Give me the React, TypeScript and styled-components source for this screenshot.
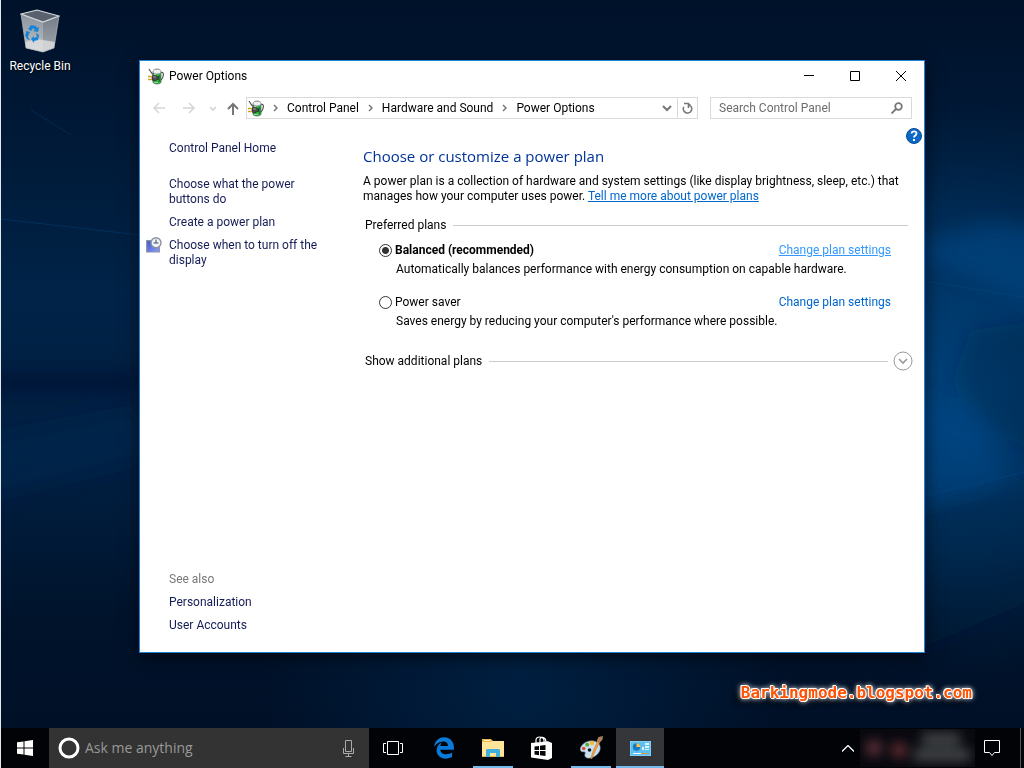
import React, { useState } from "react";
import styled, { createGlobalStyle, css } from "styled-components";
import { FaEdgeLegacy } from "react-icons/fa6";

const uiFont = `Roboto, "Noto Sans", sans-serif`;
const displayFont = `"Open Sans", "Noto Sans", sans-serif`;

const GlobalStyle = createGlobalStyle`
  * { box-sizing: border-box; }
  body { margin: 0; background: #001126; }
  button, input { font: inherit; color: inherit; }
  button { border: 0; padding: 0; background: none; }
  svg { display: block; flex: none; }
`;

const Screen = styled.div`
  display: flex;
  flex-direction: column;
  height: 100vh;
  border-left: 1px solid #e4e8ec;
  font: 12px/15px ${uiFont};
  color: #000;
  overflow: hidden;
`;

const Desktop = styled.main`
  position: relative;
  flex: 1;
  min-height: 0;
  background: #001a37;
`;

const Wallpaper = styled.svg`
  position: absolute;
  inset: 0;
  width: 100%;
  height: 100%;
`;

const DesktopIcon = styled.a`
  position: absolute;
  top: 8px;
  left: 1px;
  width: 76px;
  display: flex;
  flex-direction: column;
  align-items: center;
  gap: 5px;
  color: #fff;
  text-decoration: none;
  text-shadow: 1px 1px 2px #000;
`;

const Watermark = styled.div`
  position: absolute;
  right: 52px;
  bottom: 24px;
  font: bold 16px/22px "DejaVu Sans Mono", monospace;
  color: #ff5205;
  text-shadow: 1px 0 #fff, -1px 0 #fff, 0 1px #fff, 0 -1px #fff, 1px 1px #fff, -1px -1px #fff,
    0 0 5px #fff, 0 0 6px #fff, -6px 5px 6px #000;
`;

const Window = styled.section`
  position: absolute;
  inset: 60px 99px 75px 138px;
  display: flex;
  flex-direction: column;
  background: #fff;
  border: 1px solid #1883d7;
  box-shadow: 0 4px 16px rgba(0, 0, 0, 0.6);
`;

const TitleBar = styled.header`
  display: flex;
  align-items: center;
  height: 30px;
  padding-left: 8px;
  gap: 5px;
`;

const WindowTitle = styled.h1`
  flex: 1;
  margin: 0;
  font-size: 12px;
  font-weight: normal;
`;

const CaptionButtons = styled.div`
  display: flex;
  height: 100%;
`;

const CaptionButton = styled.button`
  display: grid;
  place-items: center;
  width: 46px;
`;

const NavBar = styled.nav`
  display: flex;
  align-items: center;
  padding: 6px 12px 0 7px;
`;

const NavButton = styled.button<{ $w?: number }>`
  display: grid;
  place-items: center;
  width: ${(p) => p.$w ?? 30}px;
  height: 22px;
`;

const AddressBar = styled.div`
  display: flex;
  flex: 1;
  height: 22px;
  margin-right: 12px;
  border: 1px solid #d9d9d9;
`;

const Crumbs = styled.div`
  display: flex;
  flex: 1;
  align-items: center;
  padding-left: 1px;
`;

const Crumb = styled.a`
  color: #000;
  text-decoration: none;
  white-space: nowrap;
`;

const CrumbArrow = styled.svg`
  margin: 0 9px;
`;

const AddressButton = styled.button<{ $divided?: boolean }>`
  display: grid;
  place-items: center;
  width: 20px;
  ${(p) => p.$divided && css`border-left: 1px solid #d9d9d9;`}
`;

const SearchBox = styled.label`
  display: flex;
  align-items: center;
  width: 202px;
  height: 22px;
  padding: 0 8px;
  border: 1px solid #d9d9d9;
`;

const SearchInput = styled.input`
  flex: 1;
  min-width: 0;
  padding: 0;
  border: 0;
  outline: 0;
  background: transparent;
  &::placeholder { color: #6d6d6d; opacity: 1; }
`;

const Body = styled.div`
  position: relative;
  display: flex;
  flex: 1;
  min-height: 0;
`;

const HelpButton = styled.button`
  position: absolute;
  top: 9px;
  right: 2px;
`;

const Sidebar = styled.aside`
  display: flex;
  flex-direction: column;
  gap: 8px;
  width: 195px;
  padding: 22px 12px 19px 29px;
`;

const SideLink = styled.a<{ $home?: boolean }>`
  position: relative;
  color: #151c55;
  text-decoration: none;
  margin-bottom: ${(p) => (p.$home ? 13 : 0)}px;
`;

const SideIcon = styled.svg`
  position: absolute;
  left: -23px;
  top: -1px;
`;

const SeeAlso = styled.div`
  margin-top: auto;
  color: #787878;
`;

const Content = styled.div`
  flex: 1;
  min-width: 0;
  padding: 27px 11px 0 28px;
`;

const Heading = styled.h2`
  margin: 0 0 8px;
  font-family: ${displayFont};
  font-size: 15px;
  line-height: 20px;
  font-weight: normal;
  color: #003399;
`;

const Intro = styled.p`
  margin: 0 0 13px;
`;

const Link = styled.a<{ $hot?: boolean; $plain?: boolean }>`
  color: ${(p) => (p.$hot ? "#3399ff" : "#0066cc")};
  text-decoration: ${(p) => (p.$plain ? "none" : "underline")};
  white-space: nowrap;
`;

const GroupHeader = styled.div`
  display: flex;
  align-items: center;
  height: 16px;
  padding-left: 2px;
`;

const Rule = styled.hr`
  flex: 1;
  height: 1px;
  margin: 0 5px 0 7px;
  border: 0;
  background: #cbcbcb;
`;

const PlanList = styled.div`
  display: flex;
  flex-direction: column;
  gap: 18px;
  padding: 10px 22px 24px 16px;
`;

const Plan = styled.div``;

const PlanTop = styled.div`
  display: flex;
  justify-content: space-between;
`;

const PlanLabel = styled.label<{ $bold?: boolean }>`
  display: flex;
  align-items: center;
  gap: 3px;
  font-weight: ${(p) => (p.$bold ? "bold" : "normal")};
`;

const Radio = styled.input`
  appearance: none;
  width: 13px;
  height: 13px;
  margin: 0;
  border: 1px solid #333;
  border-radius: 50%;
  background: #fff;
  &:checked { background: radial-gradient(circle, #333 3px, #fff 4px); }
`;

const PlanText = styled.p`
  margin: 4px 0 0 17px;
`;

const Taskbar = styled.footer`
  display: flex;
  height: 40px;
  background: #010306;
  color: #fff;
`;

const StartButton = styled.button`
  display: grid;
  place-items: center;
  width: 48px;
`;

const Cortana = styled.label`
  display: flex;
  align-items: center;
  width: 320px;
  padding: 0 14px 0 9px;
  gap: 5px;
  background: #333;
`;

const CortanaInput = styled(SearchInput)`
  font-family: ${displayFont};
  font-size: 14px;
  line-height: 20px;
  &::placeholder { color: #999; }
`;

const TaskButtons = styled.div`
  display: flex;
  flex: 1;
  gap: 1px;
  & > :first-child { margin-right: 2px; }
`;

const TaskButton = styled.button<{ $state?: "open" | "active" }>`
  display: grid;
  place-items: center;
  width: 48px;
  background: ${(p) => (p.$state === "active" ? "#343639" : "none")};
  ${(p) =>
    p.$state &&
    css`
      background-image: linear-gradient(#76b9ed, #76b9ed);
      background-repeat: no-repeat;
      background-position: center bottom;
      background-size: ${p.$state === "active" ? "48px" : "40px"} 2px;
    `}
`;

const Tray = styled.div`
  display: flex;
  align-items: center;
`;

const TrayButton = styled.button<{ $w: number }>`
  display: grid;
  place-items: center;
  width: ${(p) => p.$w}px;
  height: 40px;
`;

const ShowDesktop = styled.button`
  width: 4px;
  height: 40px;
  margin-left: 11px;
  border-left: 1px solid #55585c;
`;

const PowerIcon = () => (
  <svg width="16" height="17" viewBox="0 0 16 17" fill="none">
    <path d="M12.500 4.500c2.500-.8 3.200.5 2.800 3-.3 2-.8 3-2.300 4.500" stroke="#555" strokeWidth="1.200" />
    <path d="M5 3.500v10.500c0 2.600 8 2.600 8 0v-10.500z" fill="#35b344" stroke="#46584a" strokeWidth=".7" />
    <path d="M6 5.500h2v3H6z" fill="#b6ecb6" />
    <path d="M10.500 7h1.800v7h-1.800z" fill="#168527" />
    <path d="M6 14h4v1H6z" fill="#7ddc86" />
    <ellipse cx="9" cy="3.500" rx="4" ry="2.500" fill="#eef1f3" stroke="#8a9299" strokeWidth=".8" />
    <path d="M7 .8h4v1H7z" fill="#9aa29f" />
    <path d="M1 1l2.200 3.500L5 6.500" stroke="#555" strokeWidth="1.200" />
    <path d="M4 8c1.500-1.200 4-1 5 .5h1.500v3H9c-1 1.500-3.500 1.700-5 .5z" fill="#4a4a4a" stroke="#222" strokeWidth=".6" />
    <path d="M5 9h3" stroke="#999" />
    <path d="M0 8.500h3.700M0 11.500h3.700" stroke="#d2a51c" strokeWidth="1.400" />
  </svg>
);

const BinIcon = () => (
  <svg width="40" height="46" viewBox="0 0 40 46">
    <defs>
      <linearGradient id="binL" x2="0" y2="1"><stop stopColor="#8b939c" /><stop offset="1" stopColor="#bfc4c8" /></linearGradient>
      <linearGradient id="binR" x2="0" y2="1"><stop stopColor="#747c87" /><stop offset="1" stopColor="#a4a9ae" /></linearGradient>
    </defs>
    <path d="M1 6L23 14V44L6 40z" fill="url(#binL)" />
    <path d="M23 14L39 8L34 40L23 44z" fill="url(#binR)" />
    <path d="M1 6L17 2L39 8L23 14z" fill="#58616d" />
    <path d="M5 34l12-3 18 3-1 6-11 4-17-4z" fill="#e1e2e3" opacity=".75" />
    <path d="M1 6L17 2L39 8L23 14z" fill="none" stroke="#d8dcdf" strokeWidth="1.200" />
    <path d="M1 6L6 40L23 44L34 40L39 8" fill="none" stroke="#b5babf" strokeWidth=".7" />
    <g fill="#1583d8">
      <path d="M8 21l3-4 5 1 1 2 2-1-1 5-5-1 2-1-2-2-2 3z" />
      <path d="M6 23l4 1-1 2-1 3 2 3-3-1-2-4 1-2z" />
      <path d="M16 25l3 2-1 5-4 1v2l-3-4 3-3v2l3-1z" />
    </g>
  </svg>
);

const DisplayClockIcon = () => (
  <SideIcon width="16" height="16" viewBox="0 0 16 16">
    <defs><linearGradient id="screen" x2="1" y2="1"><stop stopColor="#3a4fd0" /><stop offset="1" stopColor="#8ea2f5" /></linearGradient></defs>
    <path d="M.7 3.700h12.600v11.300H.7z" fill="url(#screen)" stroke="#8a90a8" strokeWidth="1.200" />
    <circle cx="10" cy="5.700" r="5" fill="#f1f4f7" stroke="#8b929b" strokeWidth="1.400" />
    <path d="M10 2.500v3.500M7.500 6h5" fill="none" stroke="#394a63" />
  </SideIcon>
);

const CircleDown = () => (
  <svg width="20" height="20" viewBox="0 0 20 20" fill="none" stroke="#999">
    <circle cx="10" cy="10" r="9" />
    <path d="M6 8l4 4 4-4" strokeWidth="1.600" />
  </svg>
);

const Separator = () => (
  <CrumbArrow width="5" height="8" viewBox="0 0 5 8" fill="none" stroke="#777" strokeWidth="1.500">
    <path d="M1 1l3 3-3 3" />
  </CrumbArrow>
);

const wallpaper = (
  <Wallpaper viewBox="0 0 1023 728" preserveAspectRatio="none" aria-hidden="true">
    <defs>
      <linearGradient id="base" x2="0" y2="1">
        <stop stopColor="#00112a" /><stop offset=".2" stopColor="#001a38" />
        <stop offset=".4" stopColor="#002347" /><stop offset=".65" stopColor="#001f41" />
        <stop offset=".85" stopColor="#00132b" /><stop offset="1" stopColor="#001027" />
      </linearGradient>
      <radialGradient id="glow" cx="960" cy="390" r="290" gradientUnits="userSpaceOnUse">
        <stop stopColor="#004a88" stopOpacity=".85" /><stop offset=".55" stopColor="#003f76" stopOpacity=".5" />
        <stop offset="1" stopColor="#002a54" stopOpacity="0" />
      </radialGradient>
      <radialGradient id="low" cx="520" cy="690" r="260" gradientUnits="userSpaceOnUse">
        <stop stopColor="#002347" stopOpacity=".8" /><stop offset="1" stopColor="#002347" stopOpacity="0" />
      </radialGradient>
      <filter id="soft"><feGaussianBlur stdDeviation="10" /></filter>
    </defs>
    <rect width="1023" height="728" fill="url(#base)" />
    <rect width="1023" height="728" fill="url(#low)" />
    <rect width="1023" height="728" fill="url(#glow)" />
    <g filter="url(#soft)">
      <path d="M970 330L1043 320V460L995 430L950 385z" fill="#001c3d" opacity=".3" />
      <path d="M904 390l80 40 20 50-100 30z" fill="#0059a2" opacity=".25" />
      <path d="M904 250l86-27 53 6v76z" fill="#00569e" opacity=".35" />
      <path d="M904 510l139-35v120l-139 60z" fill="#001b3b" opacity=".25" />
      <path d="M-20 372h159v20H-20z" fill="#001024" opacity=".4" />
      <path d="M-20 440l159-30v50L-20 500z" fill="#003058" opacity=".3" />
    </g>
    <path d="M924 281l99 16M924 496l99-24M0 219l139 16M30 110l40 25" stroke="#075596" strokeOpacity=".3" fill="none" />
  </Wallpaper>
);

const plans = [
  { id: "balanced", name: "Balanced (recommended)", text: "Automatically balances performance with energy consumption on capable hardware." },
  { id: "saver", name: "Power saver", text: "Saves energy by reducing your computer's performance where possible." },
];

export default function App() {
  const [plan, setPlan] = useState("balanced");
  return (
    <Screen>
      <GlobalStyle />
      <Desktop>
        {wallpaper}
        <DesktopIcon href="#bin"><BinIcon />Recycle Bin</DesktopIcon>
        <Window>
          <TitleBar>
            <PowerIcon />
            <WindowTitle>Power Options</WindowTitle>
            <CaptionButtons>
              <CaptionButton aria-label="Minimize"><svg width="10" height="10"><path d="M0 4.500h10" stroke="#000" /></svg></CaptionButton>
              <CaptionButton aria-label="Maximize"><svg width="10" height="10"><path d="M.5.5h9v9h-9z" stroke="#000" fill="none" /></svg></CaptionButton>
              <CaptionButton aria-label="Close"><svg width="10" height="10"><path d="M0 0l10 10M10 0L0 10" stroke="#000" /></svg></CaptionButton>
            </CaptionButtons>
          </TitleBar>
          <NavBar aria-label="Location">
            <NavButton $w={24} aria-label="Back"><svg width="12" height="12" fill="none" stroke="#d5d5d5" strokeWidth="1.500"><path d="M12 6H1M6 1L1 6l5 5" /></svg></NavButton>
            <NavButton $w={36} aria-label="Forward"><svg width="12" height="12" fill="none" stroke="#d5d5d5" strokeWidth="1.500"><path d="M0 6h11M6 1l5 5-5 5" /></svg></NavButton>
            <NavButton $w={12} aria-label="Recent locations"><svg width="6" height="5" fill="none" stroke="#d0d0d0" strokeWidth="1.500"><path d="M0 1l3 3 3-3" /></svg></NavButton>
            <NavButton $w={27} aria-label="Up"><svg width="12" height="13" fill="none" stroke="#777" strokeWidth="2"><path d="M6 13V2M1 7l5-5 5 5" /></svg></NavButton>
            <AddressBar>
              <Crumbs>
                <PowerIcon /><Separator />
                <Crumb href="#cp">Control Panel</Crumb><Separator />
                <Crumb href="#hw">Hardware and Sound</Crumb><Separator />
                <Crumb href="#po">Power Options</Crumb>
              </Crumbs>
              <AddressButton aria-label="Previous locations"><svg width="10" height="7" fill="none" stroke="#777" strokeWidth="2"><path d="M1 1l4 4 4-4" /></svg></AddressButton>
              <AddressButton $divided aria-label="Refresh">
                <svg width="11" height="12" viewBox="0 0 11 12" fill="none" stroke="#777" strokeWidth="1.600"><path d="M1.800 4.800A4.200 4.200 0 1 0 7.500 3.100M2 1.500h4.500v4.500M6.500 2.800h2" /></svg>
              </AddressButton>
            </AddressBar>
            <SearchBox>
              <SearchInput type="text" placeholder="Search Control Panel" aria-label="Search Control Panel" />
              <svg width="12" height="12" fill="none" stroke="#777" strokeWidth="1.800"><circle cx="7.500" cy="4.500" r="3.300" /><path d="M5 7l-4.500 4.500" /></svg>
            </SearchBox>
          </NavBar>
          <Body>
            <Sidebar>
              <SideLink href="#home" $home>Control Panel Home</SideLink>
              <SideLink href="#buttons">Choose what the power<br />buttons do</SideLink>
              <SideLink href="#create">Create a power plan</SideLink>
              <SideLink href="#display"><DisplayClockIcon />Choose when to turn off the display</SideLink>
              <SeeAlso>See also</SeeAlso>
              <SideLink href="#personalization">Personalization</SideLink>
              <SideLink href="#users">User Accounts</SideLink>
            </Sidebar>
            <Content>
              <Heading>Choose or customize a power plan</Heading>
              <Intro>
                A power plan is a collection of hardware and system settings (like display brightness, sleep, etc.) that{" "}
                manages how your computer uses power. <Link href="#more">Tell me more about power plans</Link>
              </Intro>
              <GroupHeader>Preferred plans<Rule /></GroupHeader>
              <PlanList>
                {plans.map((p, i) => (
                  <Plan key={p.id}>
                    <PlanTop>
                      <PlanLabel $bold={plan === p.id}>
                        <Radio type="radio" name="plan" checked={plan === p.id} onChange={() => setPlan(p.id)} />
                        {p.name}
                      </PlanLabel>
                      <Link href={`#${p.id}`} $hot={i === 0} $plain={i === 1}>Change plan settings</Link>
                    </PlanTop>
                    <PlanText>{p.text}</PlanText>
                  </Plan>
                ))}
              </PlanList>
              <GroupHeader>Show additional plans<Rule /><button aria-label="Show additional plans"><CircleDown /></button></GroupHeader>
            </Content>
            <HelpButton aria-label="Help">
              <svg width="16" height="16" viewBox="0 0 16 16">
                <circle cx="8" cy="8" r="7.500" fill="#0968c8" stroke="#084c91" />
                <path d="M5.500 5.500c.3-3 5.200-2.800 5 0 0 2-2.500 2-2.500 4" fill="none" stroke="#fff" strokeWidth="1.800" />
                <path d="M7 11h2v2H7z" fill="#fff" />
              </svg>
            </HelpButton>
          </Body>
        </Window>
        <Watermark>Barkingmode.blogspot.com</Watermark>
      </Desktop>
      <Taskbar>
        <StartButton aria-label="Start">
          <svg width="16" height="16" viewBox="0 0 16 16" fill="#fff"><path d="M0 2.300L6.500 1.400V7.500H0zM7.500 1.200L16 0v7.500H7.500zM0 8.500h6.500v6.100L0 13.700zM7.500 8.500H16V16l-8.500-1.200z" /></svg>
        </StartButton>
        <Cortana>
          <svg width="22" height="22" fill="none" stroke="#fff" strokeWidth="3"><circle cx="11" cy="11" r="9" /></svg>
          <CortanaInput type="text" placeholder="Ask me anything" aria-label="Ask me anything" />
          <svg width="13" height="17" fill="none" stroke="#aaa"><path d="M3.500.5h6v11h-6zM1.500 8v5.500h10V8M6.500 14v2M3.500 16.500h6" /></svg>
        </Cortana>
        <TaskButtons>
          <TaskButton aria-label="Task view"><svg width="20" height="14" fill="none" stroke="#fff"><path d="M4.500.5h11v13h-11zM3 2.500H.5v9H3M17 2.500h2.500v9H17" /></svg></TaskButton>
          <TaskButton aria-label="Edge"><FaEdgeLegacy size={22} color="#0a7ad8" /></TaskButton>
          <TaskButton $state="open" aria-label="File Explorer">
            <svg width="22" height="18" viewBox="0 0 22 18"><path d="M0 0h9l2 2h11v16H0z" fill="#e9b94c" /><path d="M0 3h9l1-1h12v15H0z" fill="#ffe49a" /><path d="M2 1h6v1H2z" fill="#fff3c8" /><path d="M4 18v-7l1-1h12l1 1v7h-4v-4H8v4z" fill="#3fb0dc" /></svg>
          </TaskButton>
          <TaskButton aria-label="Store">
            <svg width="22" height="24" viewBox="0 0 22 24"><path d="M5 7V4c0-4 7-4 8 0v3M9 6V3c1-3 6-2 6 3" fill="none" stroke="#fff" strokeWidth="1.200" /><path d="M0 7l17-1.800 4 1.800v15l-4 2L0 21.500z" fill="#fff" /><path d="M3.500 10.500l4.500-.6V14H3.500zM9 9.800l5.500-.8v5H9zM3.500 15h4.500v4.200l-4.500-.6zM9 15h5.500v5.100L9 19.300z" fill="#05080c" /></svg>
          </TaskButton>
          <TaskButton $state="open" aria-label="Paint">
            <svg width="24" height="24" viewBox="0 0 24 24">
              <path d="M2 11C5 5 14 3 19 7c4 4 2 10-3 13-4 2.500-9 3-10 0-.5-2 1-3 0-4s-3 .5-4-1c-.8-1.200-.6-2.800 0-4z" fill="#c9e0ef" stroke="#8db4d0" strokeWidth=".7" />
              <circle cx="4.700" cy="12.500" r="1.800" fill="#df4b36" /><circle cx="8.200" cy="8.800" r="2" fill="#56ad35" /><circle cx="13" cy="7" r="2.200" fill="#f4b930" /><circle cx="10.500" cy="14" r="1.800" fill="#06192c" />
              <path d="M20.500 6.500l-4.500 9-3.500 7.500-.5-1 2.500-8 4-8.500z" fill="#f0a04c" stroke="#d97e24" strokeWidth=".7" />
              <path d="M17.500 5l2-4L24 0l-.5 3.500-3 3.500z" fill="#a8805c" />
            </svg>
          </TaskButton>
          <TaskButton $state="active" aria-label="Control Panel">
            <svg width="21" height="15" viewBox="0 0 21 15"><path d="M0 0h21v15H0z" fill="#5cc0f2" stroke="#a1def8" /><circle cx="6.500" cy="6" r="3.700" fill="#1878c0" /><path d="M6.500 6V2.300A3.700 3.700 0 0 1 10.200 6z" fill="#ffc14b" /><path d="M12 6h2v3h-2zM15 2h4v2h-4zM15 5h4v2h-4zM15 8h4v1h-4z" fill="#dff5ff" /><path d="M3 12.500h8" stroke="#fff" /><path d="M11 12.500h7" stroke="#e69b32" /></svg>
          </TaskButton>
        </TaskButtons>
        <Tray>
          <TrayButton $w={24} aria-label="Show hidden icons"><svg width="12" height="7" fill="none" stroke="#fff" strokeWidth="1.300"><path d="M0 6.500l6-6 6 6" /></svg></TrayButton>
          <svg width="115" height="38" viewBox="0 0 115 38" aria-hidden="true">
            <defs><filter id="trayBlur" x="-20%" y="-40%" width="140%" height="180%"><feGaussianBlur stdDeviation="6" /></filter></defs>
            <rect width="115" height="38" fill="#07090f" />
            <g filter="url(#trayBlur)"><circle cx="14" cy="19" r="8" fill="#63303a" /><circle cx="39" cy="21" r="8" fill="#632a32" /><path d="M62 4h38v12H62zM54 20h56v12H54z" fill="#44464a" /></g>
          </svg>
          <TrayButton $w={34} aria-label="Notifications"><svg width="16" height="17" fill="none" stroke="#fff"><path d="M.5.5h15v12h-5l-2.500 3-2.500-3h-5z" /></svg></TrayButton>
          <ShowDesktop aria-label="Show desktop" />
        </Tray>
      </Taskbar>
    </Screen>
  );
}
